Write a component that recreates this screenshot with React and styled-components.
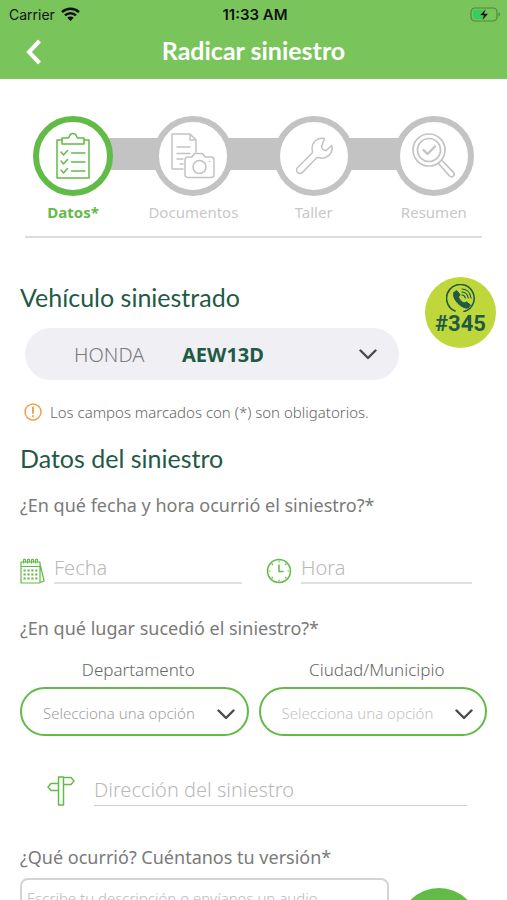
import React from 'react';
import styled, { createGlobalStyle } from 'styled-components';

const GlobalStyle = createGlobalStyle`
  *, *::before, *::after { box-sizing: border-box; }
  body {
    margin: 0;
    background: #fff;
    color: #7a7a7a;
    font-family: "Noto Sans", "Open Sans", sans-serif;
  }
  h1, h2, p, ol, fieldset { margin: 0; padding: 0; }
  button, input, select, textarea { font-family: inherit; }
`;

const color = {
  header: '#79c55b',
  green: '#62bb46',
  dark: '#1f5a46',
  lime: '#bfd73a',
  grey: '#c3c3c3',
  label: '#c8c8c8',
  placeholder: '#b9b9b9',
  arrow: '#4a4a4f',
};

const Screen = styled.div`
  display: flex;
  flex-direction: column;
  height: 100vh;
`;

const Header = styled.header`
  flex: none;
  background: ${color.header};
`;

const StatusBar = styled.div`
  display: grid;
  grid-template-columns: 1fr auto 1fr;
  align-items: center;
  height: 28px;
  padding: 0 6px 0 9px;
  color: #111;
  font-family: Inter, sans-serif;
  font-size: 14px;
`;

const Carrier = styled.div`
  display: flex;
  align-items: center;
  gap: 6px;
`;

const Clock = styled.time`
  font-size: 15px;
  font-weight: 600;
`;

const Battery = styled.svg`
  justify-self: end;
`;

const NavBar = styled.div`
  display: grid;
  grid-template-columns: 40px 1fr 40px;
  align-items: center;
  height: 51px;
  padding: 0 13px 4px;
`;

const BackButton = styled.button`
  display: flex;
  align-items: center;
  justify-content: center;
  height: 40px;
  padding: 0;
  border: 0;
  background: none;
`;

const Title = styled.h1`
  padding-bottom: 3px;
  color: #fff;
  font-family: Lato, sans-serif;
  font-size: 25px;
  font-weight: 700;
  line-height: 32px;
  text-align: center;
`;

const Main = styled.main`
  flex: 1;
  min-height: 0;
  overflow-y: auto;
  scrollbar-width: none;
`;

const Steps = styled.ol`
  display: grid;
  grid-template-columns: repeat(4, 1fr);
  padding: 37px 13px 0;
  list-style: none;
`;

const Step = styled.li`
  display: flex;
  flex-direction: column;
  gap: 4px;
  color: ${(p) => (p.$active ? color.green : color.label)};
  font-size: 15px;
  font-weight: ${(p) => (p.$active ? 700 : 400)};
  line-height: 24px;
  text-align: center;
`;

const StepTrack = styled.div`
  display: flex;
  align-items: center;
`;

const Rail = styled.span`
  flex: 1;
  height: 32px;
  margin: 0 -5px 4px;
  background: ${(p) => (p.$hidden ? 'transparent' : color.grey)};
`;

const StepCircle = styled.span`
  z-index: 1;
  display: flex;
  align-items: center;
  justify-content: center;
  width: 80px;
  height: 80px;
  border: 6px solid ${(p) => (p.$active ? color.green : color.grey)};
  border-radius: 50%;
  background: #fff;
  color: ${(p) => (p.$active ? color.green : color.grey)};
`;

const Divider = styled.hr`
  height: 2px;
  margin: 12px 25px 0;
  border: 0;
  background: #dcdcdc;
`;

const Vehicle = styled.section`
  display: flex;
  align-items: flex-start;
  gap: 26px;
  padding: 39px 11px 0 20px;
`;

const VehicleInfo = styled.div`
  flex: 1;
`;

const Heading = styled.h2`
  color: ${color.dark};
  font-family: Lato, sans-serif;
  font-size: 25px;
  font-weight: 400;
  line-height: 40px;
`;

const VehiclePicker = styled.button`
  display: grid;
  grid-template-columns: 108px 1fr 20px;
  align-items: center;
  width: calc(100% - 5px);
  height: 52px;
  margin: 11px 0 0 5px;
  padding: 0 20px 0 49px;
  border: 0;
  border-radius: 26px;
  background: #efeff4;
  color: #7a7a7a;
  font-size: 20px;
  font-weight: 300;
  text-align: left;
`;

const Plate = styled.strong`
  color: ${color.dark};
  font-weight: 700;
`;

const CallBadge = styled.a`
  display: flex;
  flex-direction: column;
  align-items: center;
  width: 71px;
  height: 71px;
  padding-top: 7px;
  border-radius: 50%;
  background: ${color.lime};
  color: ${color.dark};
  font-family: Roboto, sans-serif;
  font-size: 22px;
  font-weight: 700;
  line-height: 24px;
  text-decoration: none;
`;

const Notice = styled.p`
  display: flex;
  align-items: center;
  gap: 8px;
  padding: 22px 24px 0;
  color: #666;
  font-size: 15px;
  font-weight: 300;
  line-height: 20px;
`;

const Form = styled.form`
  padding: 16px 20px 0;
`;

const Group = styled.fieldset`
  min-width: 0;
  border: 0;
`;

const Question = styled.legend`
  display: block;
  padding: ${(p) => (p.$first ? 14 : 31)}px 0 0;
  font-size: 18px;
  line-height: 26px;
`;

const DateRow = styled.div`
  display: grid;
  grid-template-columns: 1fr 206px;
  gap: 24px;
  padding: 34px 15px 0 0;
`;

const LineField = styled.label`
  display: flex;
  align-items: flex-end;
  gap: ${(p) => p.$gap}px;
`;

const LineInput = styled.input`
  flex: 1;
  width: 0;
  min-width: 0;
  height: 32px;
  padding: 0;
  border: 0;
  border-bottom: ${(p) => (p.$thin ? '1px solid #cfcfcf' : '2px solid #e0e0e0')};
  background: none;
  color: #737373;
  font-size: 20px;
  font-weight: 300;
  &::placeholder { color: ${color.placeholder}; opacity: 1; }
`;

const SelectRow = styled.div`
  display: grid;
  grid-template-columns: 1fr 1fr;
  gap: 10px;
  padding-top: 17px;
`;

const SelectField = styled.label`
  display: flex;
  flex-direction: column;
  gap: 5px;
  color: #666;
  font-size: 17px;
  font-weight: 300;
  line-height: 24px;
  text-align: center;
`;

const SelectLabel = styled.span`
  padding-left: 8px;
`;

const SelectBox = styled.span`
  display: grid;
  align-items: center;
`;

const Select = styled.select`
  grid-area: 1 / 1;
  width: 100%;
  height: 49px;
  padding: 2px 50px 0 21px;
  border: 2px solid ${color.green};
  border-radius: 25px;
  appearance: none;
  background: #fff;
  color: ${(p) => (p.$muted ? '#c2c2c2' : '#a0a0a0')};
  font-size: 15px;
  font-weight: 300;
`;

const SelectArrow = styled.span`
  grid-area: 1 / 1;
  display: flex;
  justify-self: end;
  margin: 5px 14px 0 0;
  pointer-events: none;
`;

const AddressRow = styled.div`
  display: flex;
  flex-direction: column;
  padding: 38px 20px 0 27px;
`;

const StoryLabel = styled.label`
  display: block;
  padding-top: 38px;
  font-size: 18px;
  line-height: 26px;
`;

const StoryRow = styled.div`
  display: flex;
  align-items: flex-start;
  justify-content: space-between;
  padding: 8px 8px 24px 0;
`;

const StoryBox = styled.textarea`
  flex: 1;
  max-width: 369px;
  height: 110px;
  padding: 7px 5px;
  border: 2px solid #d4d4d4;
  border-radius: 8px;
  resize: none;
  color: #737373;
  font-size: 15px;
  font-weight: 300;
  line-height: 22px;
  &::placeholder { color: ${color.placeholder}; opacity: 1; }
`;

const RecordButton = styled.button`
  display: flex;
  align-items: center;
  justify-content: center;
  width: 80px;
  height: 80px;
  margin-top: 10px;
  border: 0;
  border-radius: 50%;
  background: ${color.green};
  color: #fff;
`;

const Stroke = ({ children, width, height, box, sw = 2, ...rest }) => (
  <svg
    width={width}
    height={height}
    viewBox={box || `0 0 ${width} ${height}`}
    fill="none"
    stroke="currentColor"
    strokeWidth={sw}
    strokeLinecap="round"
    strokeLinejoin="round"
    aria-hidden="true"
    {...rest}
  >
    {children}
  </svg>
);

const Chevron = () => (
  <Stroke width={18} height={11} sw={2.4} stroke={color.arrow}>
    <path d="M1.500 1.500 9 9l7.500-7.500" />
  </Stroke>
);

const ChecklistIcon = () => (
  <Stroke width={34} height={48} sw={1.5}>
    <path d="M6 8H1v38h32V8h-5" />
    <path d="M6 12V6h6c1 0 1-1 1.400-2a3.800 3.800 0 0 1 7.200 0c.4 1 .4 2 1.400 2h6v6Z" />
    <path d="m5 20 2.500 3 4-4.500M5 29l2.500 3 4-4.500M5 38l2.500 3 4-4.500M15.500 21H29M15.500 30H29M15.500 39H29" />
  </Stroke>
);

const DocumentCameraIcon = () => (
  <Stroke width={46} height={48} sw={1.5}>
    <path d="M13 37H2V2h18l6 6v12M20 2v6h6M7 15h13M7 21.500h13M7 27h6M10 32h3" />
    <path
      fill="#fff"
      d="M18 25h4l2.500-3.500h8L35 25h6a3 3 0 0 1 3 3v14.500a3 3 0 0 1-3 3H18a3 3 0 0 1-3-3V28a3 3 0 0 1 3-3Z"
    />
    <circle cx="29.500" cy="35" r="6.500" />
    <path d="M39.500 29.500h.1" />
  </Stroke>
);

const WrenchIcon = () => (
  <Stroke width={38} height={38} sw={1.5}>
    <path d="M29.500 1.500a10 10 0 0 0-12 12.500c.2 1-.1 1.800-.8 2.500L2.600 30.500a3.400 3.400 0 0 0 4.900 4.900l13.700-14.200c.7-.7 1.500-.9 2.500-.7a10 10 0 0 0 13-12l-5.200 4.700c-2.500 1-5.200-1.500-4.700-4.200Z" />
  </Stroke>
);

const ReviewIcon = () => (
  <Stroke width={46} height={48} sw={1.7}>
    <circle cx="18" cy="18" r="16" />
    <circle cx="18" cy="18" r="11.500" />
    <path strokeWidth="2.400" d="m12.500 18 4 4 7.500-7.500" />
    <path d="m27.500 31.500 11 12.500a2.700 2.700 0 0 0 4-3.600L31 28.500" />
  </Stroke>
);

const CalendarIcon = () => (
  <Stroke width={25} height={26} stroke={color.green} sw={1.2}>
    <path d="M1 4h19v21H1ZM1 8.500h19M20 6l4 16.500c0 1.300-1.500 1.500-4 1.500" />
    <path d="M3.500 5V2c0-1.300 2-1.300 2 0v2M7.500 5V2c0-1.300 2-1.300 2 0v2M11.500 5V2c0-1.300 2-1.300 2 0v2M15.500 5V2c0-1.300 2-1.300 2 0v2" />
    <path
      strokeWidth="2.200"
      strokeLinecap="butt"
      strokeDasharray="2.200 1.700"
      d="M3.500 12.500h14.500M3.500 16.500h14.500M3.500 20.500h14.500"
    />
  </Stroke>
);

const ClockIcon = () => (
  <Stroke width={26} height={26} stroke={color.green} sw={1.5}>
    <circle cx="13" cy="13" r="11.500" />
    <path d="M13 7v6.500h4" />
    <path
      strokeWidth="1.200"
      d="M13 3v1M13 22v1M3 13h1M22 13h1M6 6l.6.6M19.400 19.400l.6.6M6 20l.6-.6M19.400 6.600 20 6"
    />
  </Stroke>
);

const SignpostIcon = () => (
  <Stroke width={28} height={30} stroke={color.green} sw={1.5}>
    <path d="M11.500 1h5v28h-5ZM16.500 1.500H24l3 3.500-3 3.500h-7.500M11.500 7.500H4L1 11l3 3.500h7.500" />
  </Stroke>
);

const AlertIcon = () => (
  <Stroke width={18} height={18} stroke="#f5a04c" sw={1.5}>
    <circle cx="9" cy="9" r="8" />
    <path strokeWidth="2" d="M9 4.500v5.500M9 13v.2" />
  </Stroke>
);

const CallIcon = () => (
  <Stroke width={30} height={28} sw={1.6}>
    <path d="M9 27A13.800 13.800 0 1 1 18 27.600" />
    <path
      fill="currentColor"
      strokeWidth="1"
      d="M8 8.500 10.500 6.500l3.500 4-1.500 2.500c1 2.700 3 5 5.500 6l2.500-1 4 3-2.500 3C16.500 25.500 5 15 8 8.500Z"
    />
    <path strokeWidth="1.200" d="M16 5c5 .3 8.500 4 9 9M16 8c3.500.3 5.700 2.500 6.200 6M16 11c2 .2 3 1.200 3.300 3" />
  </Stroke>
);

const steps = [
  { label: 'Datos*', Icon: ChecklistIcon, active: true },
  { label: 'Documentos', Icon: DocumentCameraIcon },
  { label: 'Taller', Icon: WrenchIcon },
  { label: 'Resumen', Icon: ReviewIcon },
];

const OptionSelect = ({ label, muted }) => (
  <SelectField>
    <SelectLabel>{label}</SelectLabel>
    <SelectBox>
      <Select $muted={muted} defaultValue="">
        <option value="">Selecciona una opción</option>
      </Select>
      <SelectArrow>
        <Chevron />
      </SelectArrow>
    </SelectBox>
  </SelectField>
);

export default function App() {
  return (
    <Screen>
      <GlobalStyle />
      <Header>
        <StatusBar>
          <Carrier>
            Carrier
            <svg width="19" height="14" viewBox="0 0 19 14" fill="none" stroke="#111" strokeWidth="2.500" aria-hidden="true">
              <path d="M1 5.200a12.300 12.300 0 0 1 17 0M4 8.400a8 8 0 0 1 11 0" />
              <path fill="#111" stroke="none" d="M9.500 14 6.300 10.700a4.600 4.600 0 0 1 6.400 0Z" />
            </svg>
          </Carrier>
          <Clock>11:33 AM</Clock>
          <Battery width="31" height="15" viewBox="0 0 31 15" aria-hidden="true">
            <rect x="1" y="1" width="26" height="13" rx="4" fill="none" stroke="#4d8a3a" strokeWidth="1.200" />
            <path d="M28.500 5.500c2 .6 2 3.400 0 4Z" fill="#4d8a3a" />
            <rect x="3" y="3" width="11" height="9" rx="2" fill="#35cf5f" />
            <path d="M16 1.500 9.500 8.500h4L12 14l6.500-7.500h-4Z" fill="#111" stroke="#79c55b" strokeWidth=".6" />
          </Battery>
        </StatusBar>
        <NavBar>
          <BackButton type="button" aria-label="Volver">
            <Stroke width={16} height={26} sw={4} stroke="#fff" strokeLinecap="butt" strokeLinejoin="miter">
              <path d="M14.500 2 4 13l10.500 11" />
            </Stroke>
          </BackButton>
          <Title>Radicar siniestro</Title>
        </NavBar>
      </Header>

      <Main>
        <Steps>
          {steps.map(({ label, Icon, active }, i) => (
            <Step key={label} $active={active} aria-current={active ? 'step' : undefined}>
              <StepTrack>
                <Rail $hidden={i === 0} />
                <StepCircle $active={active}>
                  <Icon />
                </StepCircle>
                <Rail $hidden={i === steps.length - 1} />
              </StepTrack>
              {label}
            </Step>
          ))}
        </Steps>
        <Divider />

        <Vehicle>
          <VehicleInfo>
            <Heading>Vehículo siniestrado</Heading>
            <VehiclePicker type="button" aria-haspopup="listbox">
              <span>HONDA</span>
              <Plate>AEW13D</Plate>
              <Chevron />
            </VehiclePicker>
          </VehicleInfo>
          <CallBadge href="tel:#345">
            <CallIcon />
            #345
          </CallBadge>
        </Vehicle>

        <Notice>
          <AlertIcon />
          Los campos marcados con (*) son obligatorios.
        </Notice>

        <Form>
          <Heading>Datos del siniestro</Heading>
          <Group>
            <Question $first>¿En qué fecha y hora ocurrió el siniestro?*</Question>
            <DateRow>
              <LineField $gap={9}>
                <CalendarIcon />
                <LineInput placeholder="Fecha" aria-label="Fecha" />
              </LineField>
              <LineField $gap={9}>
                <ClockIcon />
                <LineInput placeholder="Hora" aria-label="Hora" />
              </LineField>
            </DateRow>
          </Group>

          <Group>
            <Question>¿En qué lugar sucedió el siniestro?*</Question>
            <SelectRow>
              <OptionSelect label="Departamento" />
              <OptionSelect label="Ciudad/Municipio" muted />
            </SelectRow>
            <AddressRow>
              <LineField $gap={19}>
                <SignpostIcon />
                <LineInput $thin placeholder="Dirección del siniestro" aria-label="Dirección del siniestro" />
              </LineField>
            </AddressRow>
          </Group>

          <StoryLabel htmlFor="story">¿Qué ocurrió? Cuéntanos tu versión*</StoryLabel>
          <StoryRow>
            <StoryBox id="story" placeholder="Escribe tu descripción o envíanos un audio" />
            <RecordButton type="button" aria-label="Grabar audio">
              <Stroke width={28} height={36}>
                <rect x="9" y="2" width="10" height="20" rx="5" />
                <path d="M4 16c0 14 20 14 20 0M14 27v7M9 34h10" />
              </Stroke>
            </RecordButton>
          </StoryRow>
        </Form>
      </Main>
    </Screen>
  );
}
